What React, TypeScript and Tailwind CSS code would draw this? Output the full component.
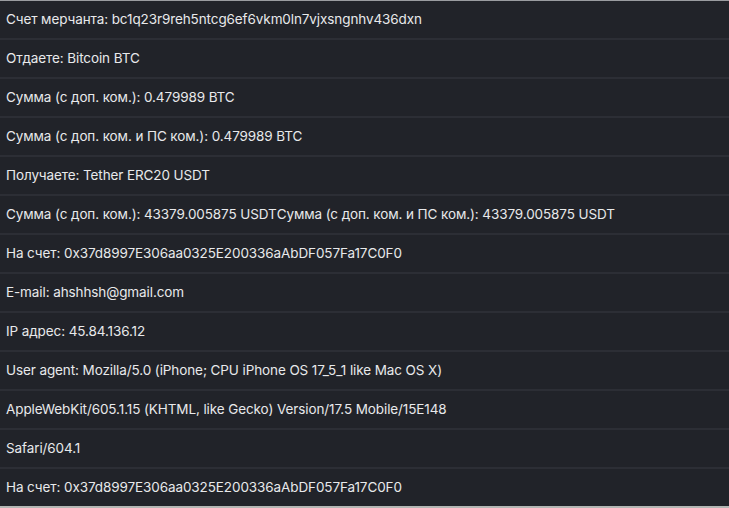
import React from 'react';

const rows = [
  'Счет мерчанта: bc1q23r9reh5ntcg6ef6vkm0ln7vjxsngnhv436dxn',
  'Отдаете: Bitcoin BTC',
  'Сумма (с доп. ком.): 0.479989 BTC',
  'Сумма (с доп. ком. и ПС ком.): 0.479989 BTC',
  'Получаете: Tether ERC20 USDT',
  'Сумма (с доп. ком.): 43379.005875 USDTСумма (с доп. ком. и ПС ком.): 43379.005875 USDT',
  'На счет: 0x37d8997E306aa0325E200336aAbDF057Fa17C0F0',
  'E-mail: ahshhsh@gmail.com',
  'IP адрес: 45.84.136.12',
  'User agent: Mozilla/5.0 (iPhone; CPU iPhone OS 17_5_1 like Mac OS X)',
  'AppleWebKit/605.1.15 (KHTML, like Gecko) Version/17.5 Mobile/15E148',
  'Safari/604.1',
  'На счет: 0x37d8997E306aa0325E200336aAbDF057Fa17C0F0',
];

const App = () => {
  return (
    <div className="w-[729px] h-[508px] overflow-hidden bg-[#212329] border-t border-b-2 border-t-[#9a9ca0] border-b-[#b4b6b4] font-['Inter',sans-serif]">
      {rows.map((text, i) => (
        <div
          key={i}
          className={`h-[37px] flex items-center px-[6px] text-[13.5px] tracking-[-0.1px] text-[#e8e9eb] whitespace-nowrap ${
            i < rows.length - 1 ? 'box-content border-b-2 border-[#2c2e35]' : ''
          }`}
        >
          {text}
        </div>
      ))}
    </div>
  );
};

export default App;
